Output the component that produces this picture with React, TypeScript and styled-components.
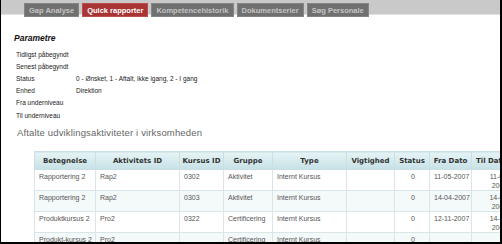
import { FunctionComponent, Fragment } from "react";
import styled, { createGlobalStyle } from "styled-components";

const GlobalStyle = createGlobalStyle`
  html, body {
    margin: 0;
    padding: 0;
    background: #ffffff;
  }
`;

const Frame = styled.div`
  width: 502px;
  height: 244px;
  box-sizing: border-box;
  border-left: 1px solid #000;
  border-right: 2px solid #000;
  border-bottom: 2px solid #000;
  overflow: hidden;
  font-family: "Liberation Sans", Arial, sans-serif;
  background: #fff;
`;

const TabBar = styled.div`
  height: 14px;
  background: #c9c9c9;
  border-bottom: 1px solid #e2e2e2;
  display: flex;
  align-items: flex-end;
  gap: 3px;
  padding-left: 23px;
`;

const Tab = styled.div<{ active?: boolean }>`
  height: 14px;
  box-sizing: border-box;
  margin-bottom: -3px;
  padding: 0 4px;
  display: flex;
  align-items: center;
  font-size: 7.5px;
  font-weight: bold;
  color: ${(p) => (p.active ? "#ffffff" : "#c4c4c4")};
  background: ${(p) => (p.active ? "#a83434" : "#707070")};
  border: 1px solid ${(p) => (p.active ? "#b85050" : "#858585")};
  white-space: nowrap;
`;

const Content = styled.div`
  padding: 18px 0 0 13px;
`;

const SectionTitle = styled.div`
  font-size: 8.5px;
  font-weight: bold;
  font-style: italic;
  color: #111;
  margin-bottom: 5px;
`;

const ParamGrid = styled.div`
  display: grid;
  grid-template-columns: 60px 1fr;
  grid-auto-rows: 12.2px;
  align-items: center;
  padding-left: 2px;
  font-size: 6.5px;
  color: #222;
`;

const Heading = styled.div`
  margin-top: 6px;
  padding-left: 3px;
  font-size: 9.5px;
  color: #666;
  letter-spacing: 0.15px;
`;

const Table = styled.table`
  margin: 13px 0 0 33px;
  border-collapse: collapse;
  table-layout: fixed;
  width: 493px;
  font-size: 7px;
  color: #555;
`;

const HeadCell = styled.th<{ align?: "left" | "center" }>`
  height: 17px;
  padding: 0 2px 0 ${(p) => (p.align === "left" ? "4px" : "2px")};
  font-family: "DejaVu Sans", Verdana, sans-serif;
  font-size: 7px;
  font-weight: bold;
  color: #333;
  text-align: ${(p) => p.align ?? "center"};
  white-space: nowrap;
  background: linear-gradient(#e6f3f5, #c6e1e6);
  border: 1px solid #c9dfe4;
`;

const Row = styled.tr<{ alt?: boolean }>`
  height: 21px;
  background: ${(p) => (p.alt ? "#f4f9fa" : "#ffffff")};
`;

const Cell = styled.td<{ align?: "left" | "center" | "right"; pad?: string }>`
  vertical-align: top;
  padding: ${(p) => p.pad ?? "3px 2px 0 4px"};
  text-align: ${(p) => p.align ?? "left"};
  line-height: 8.5px;
  border: 1px solid #d9e6e9;
  overflow: hidden;
`;

const params: [string, string][] = [
  ["Tidligst påbegyndt", ""],
  ["Senest påbegyndt", ""],
  ["Status", "0 - Ønsket, 1 - Aftalt, ikke igang, 2 - I gang"],
  ["Enhed", "Direktion"],
  ["Fra underniveau", ""],
  ["Til underniveau", ""],
];

const columns = [
  { title: "Betegnelse", width: 61 },
  { title: "Aktivitets ID", width: 84 },
  { title: "Kursus ID", width: 44 },
  { title: "Gruppe", width: 49 },
  { title: "Type", width: 74 },
  { title: "Vigtighed", width: 48 },
  { title: "Status", width: 35 },
  { title: "Fra Dato", width: 42 },
  { title: "Til Dato", width: 56 },
];

const rows = [
  ["Rapportering 2", "Rap2", "0302", "Aktivitet", "Internt Kursus", "", "0", "11-05-2007", "11-05-2007"],
  ["Rapportering 2", "Rap2", "0303", "Aktivitet", "Internt Kursus", "", "0", "14-04-2007", "14-04-2007"],
  ["Produktkursus 2", "Pro2", "0322", "Certificering", "Internt Kursus", "", "0", "12-11-2007", "14-11-2007"],
  ["Produkt-kursus 2", "Pro2", "", "Certificering", "Internt Kursus", "", "0", "", ""],
];

const tabs = ["Gap Analyse", "Quick rapporter", "Kompetencehistorik", "Dokumentserier", "Søg Personale"];

const App: FunctionComponent = () => {
  return (
    <Frame>
      <GlobalStyle />
      <TabBar>
        {tabs.map((t) => (
          <Tab key={t} active={t === "Quick rapporter"}>
            {t}
          </Tab>
        ))}
      </TabBar>
      <Content>
        <SectionTitle>Parametre</SectionTitle>
        <ParamGrid>
          {params.map(([label, value]) => (
            <Fragment key={label}>
              <span>{label}</span>
              <span>{value}</span>
            </Fragment>
          ))}
        </ParamGrid>
        <Heading>Aftalte udviklingsaktiviteter i virksomheden</Heading>
      </Content>
      <Table>
        <colgroup>
          {columns.map((c) => (
            <col key={c.title} style={{ width: c.width }} />
          ))}
        </colgroup>
        <thead>
          <tr>
            {columns.map((c) => (
              <HeadCell key={c.title} align={c.title === "Til Dato" ? "left" : "center"}>
                {c.title}
              </HeadCell>
            ))}
          </tr>
        </thead>
        <tbody>
          {rows.map((r, i) => (
            <Row key={i} alt={i % 2 === 1}>
              <Cell>{r[0]}</Cell>
              <Cell>{r[1]}</Cell>
              <Cell>{r[2]}</Cell>
              <Cell>{r[3]}</Cell>
              <Cell>{r[4]}</Cell>
              <Cell>{r[5]}</Cell>
              <Cell align="center">{r[6]}</Cell>
              <Cell pad="3px 0 0 4px">{r[7]}</Cell>
              <Cell align="center" pad="3px 10px 0 10px">{r[8]}</Cell>
            </Row>
          ))}
        </tbody>
      </Table>
    </Frame>
  );
};

export default App;
